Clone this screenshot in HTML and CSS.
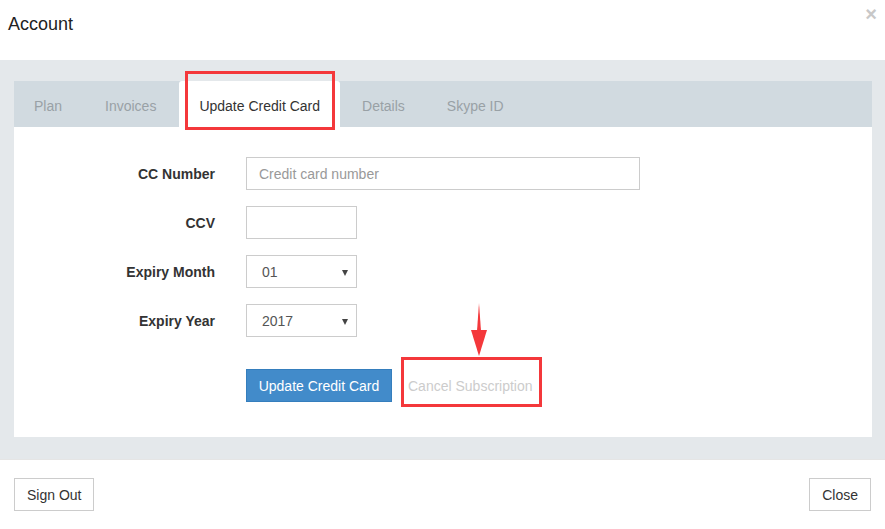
FILE: index.html
```html
<!DOCTYPE html>
<html lang="en">
<head>
    <meta charset="UTF-8">
    <title>Account</title>
    <link rel="stylesheet" href="styles.css">
</head>
<body>
    <div class="modal">
        <div class="modal-header">
            <h1>Account</h1>
            <button class="close-x">&times;</button>
        </div>
        <div class="modal-body">
            <div class="panel">
                <ul class="tabs">
                    <li>Plan</li>
                    <li>Invoices</li>
                    <li class="active">Update Credit Card<span class="mark mark-tab"></span></li>
                    <li>Details</li>
                    <li>Skype ID</li>
                </ul>
                <div class="tab-content">
                    <form class="cc-form">
                        <label>CC Number</label>
                        <input type="text" class="input wide" placeholder="Credit card number">

                        <label>CCV</label>
                        <input type="text" class="input short">

                        <label>Expiry Month</label>
                        <div class="select short">01</div>

                        <label>Expiry Year</label>
                        <div class="select short">2017</div>

                        <span></span>
                        <div class="actions">
                            <button type="button" class="btn-primary">Update Credit Card</button>
                            <button type="button" class="btn-link">Cancel Subscription
                                <span class="mark mark-cancel"></span>
                                <span class="arrow"></span>
                            </button>
                        </div>
                    </form>
                </div>
            </div>
        </div>
        <div class="modal-footer">
            <button class="btn">Sign Out</button>
            <button class="btn">Close</button>
        </div>
    </div>
</body>
</html>
```

FILE: styles.css
```css
body {
    font-family: 'Liberation Sans', Arial, sans-serif;
    font-size: 14px;
    color: #333;
    background-color: #fff;
    margin: 0;
    padding: 0;
}
.modal {
    width: 885px;
    height: 529px;
    display: flex;
    flex-direction: column;
}
.modal-header {
    height: 60px;
    box-sizing: border-box;
    padding: 13px 8px 0;
    position: relative;
}
h1 {
    margin: 0;
    font-weight: 400;
    font-size: 18px;
    line-height: 22px;
    color: #222;
}
.close-x {
    position: absolute;
    top: 4px;
    right: 8px;
    border: none;
    background: none;
    padding: 0;
    font-family: 'Liberation Sans', Arial, sans-serif;
    font-size: 20px;
    font-weight: 700;
    color: #c8c8c8;
    line-height: 20px;
}
.modal-body {
    background-color: #e4e8eb;
    padding: 21px 13px 22px 14px;
    height: 399px;
    box-sizing: border-box;
}
.panel {
    background-color: #fff;
    height: 356px;
}
.tabs {
    list-style: none;
    margin: 0;
    padding: 0;
    display: flex;
    height: 46px;
    background-color: #d1dae0;
}
.tabs li {
    padding: 0 20px;
    margin-right: 3px;
    line-height: 50px;
    color: #99a1a6;
    position: relative;
}
.tabs li.active {
    background-color: #fff;
    color: #333;
    border-radius: 3px 3px 0 0;
}
.tabs li:nth-child(4),
.tabs li:nth-child(5) {
    margin-left: -1px;
}
.tab-content {
    padding: 30px 0 35px;
}
.cc-form {
    display: grid;
    grid-template-columns: 201px auto;
    column-gap: 31px;
    row-gap: 16px;
    align-items: center;
    justify-items: start;
}
.cc-form label {
    justify-self: end;
    font-weight: 700;
    color: #333;
}
.input, .select {
    height: 33px;
    box-sizing: border-box;
    border: 1px solid #ccc;
    padding: 0 12px;
    font-family: inherit;
    font-size: 14px;
    color: #555;
    outline: none;
}
.input::placeholder {
    color: #999;
}
.wide {
    width: 394px;
}
.short {
    width: 111px;
}
.select {
    display: flex;
    align-items: center;
    padding-left: 15px;
    position: relative;
}
.select::after {
    content: '';
    position: absolute;
    right: 8px;
    top: 14px;
    border-left: 3px solid transparent;
    border-right: 3px solid transparent;
    border-top: 6px solid #444;
}
.actions {
    display: flex;
    gap: 4px;
    margin-top: 16px;
}
.btn-primary {
    width: 146px;
    height: 33px;
    padding: 0;
    background-color: #428bca;
    border: 1px solid #357ebd;
    color: #fff;
    font-family: inherit;
    font-size: 14px;
}
.btn-link {
    height: 33px;
    padding: 0 12px;
    background: none;
    border: none;
    color: #ccc;
    font-family: inherit;
    font-size: 14px;
    position: relative;
}
.mark {
    position: absolute;
    border: 3px solid #f4383b;
    box-sizing: border-box;
}
.mark-tab {
    left: 6px;
    top: -10px;
    width: 150px;
    height: 59px;
}
.mark-cancel {
    left: 5px;
    top: -12px;
    width: 141px;
    height: 50px;
}
.arrow {
    position: absolute;
    left: 75px;
    top: -66px;
    width: 16px;
    height: 53px;
}
.arrow::before {
    content: '';
    position: absolute;
    left: 6px;
    top: 0;
    width: 4px;
    height: 28px;
    background-color: #f4383b;
    clip-path: polygon(50% 0, 100% 100%, 0 100%);
}
.arrow::after {
    content: '';
    position: absolute;
    left: 0;
    top: 27px;
    border-left: 8px solid transparent;
    border-right: 8px solid transparent;
    border-top: 26px solid #f4383b;
}
.modal-footer {
    flex: 1;
    border-top: 1px solid #e5e5e5;
    display: flex;
    justify-content: space-between;
    align-items: flex-start;
    padding: 18px 14px 0;
}
.btn {
    height: 33px;
    padding: 0 12px;
    background-color: #fff;
    border: 1px solid #ccc;
    color: #333;
    font-family: inherit;
    font-size: 14px;
}
```
